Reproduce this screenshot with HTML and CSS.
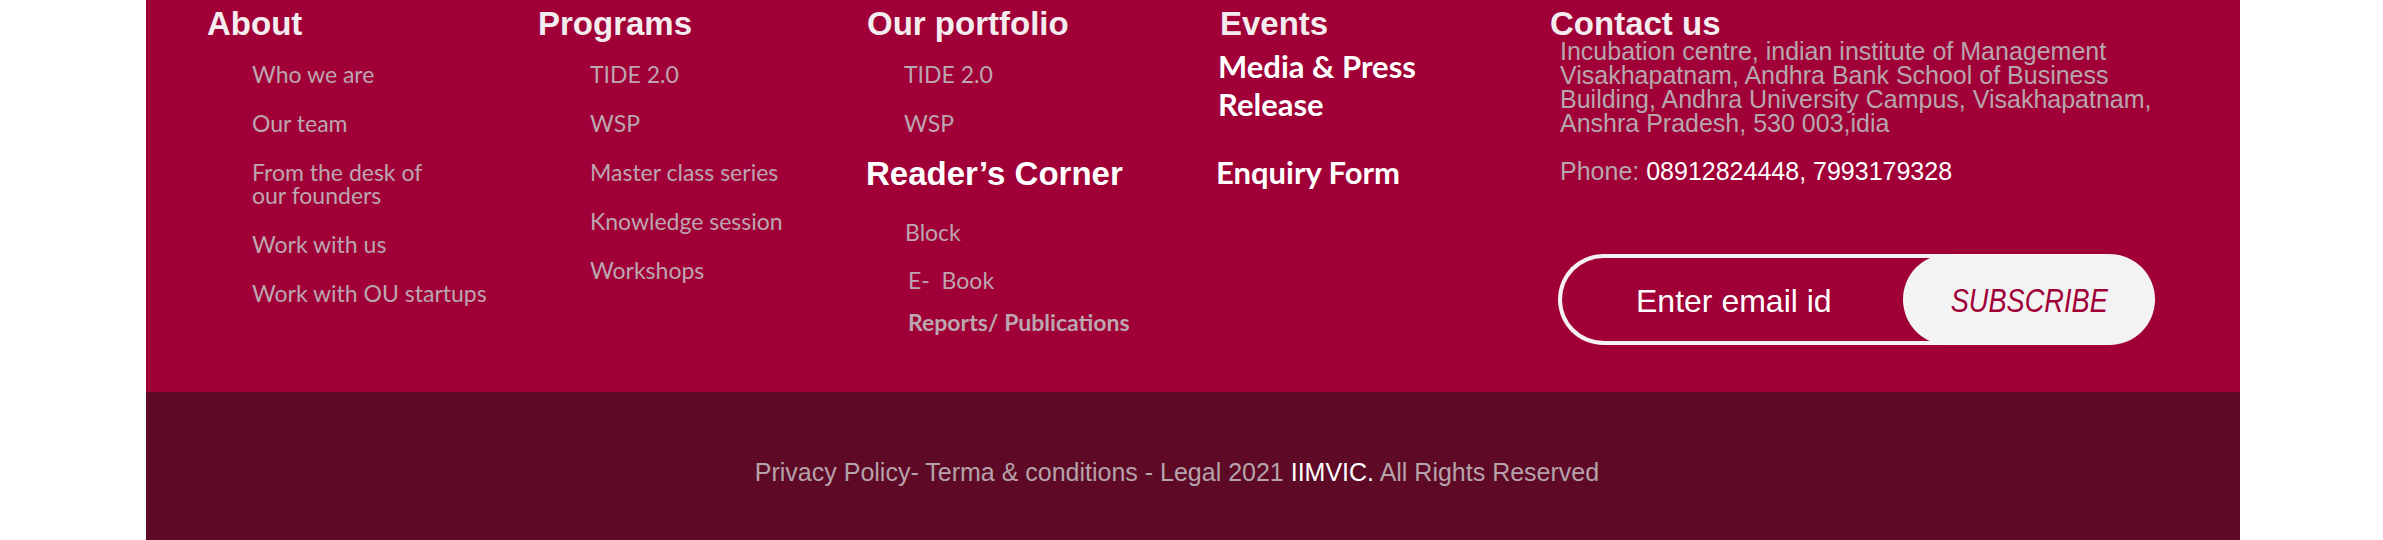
FILE: index.html
```html
<!DOCTYPE html>
<html lang="en">
<head>
<meta charset="utf-8">
<title>IIMVIC Footer</title>
<link rel="stylesheet" href="styles.css">
</head>
<body>
<footer class="footer">
  <div class="footer-main">
    <section class="col">
      <h3 class="col-title">About</h3>
      <ul class="links links-about">
        <li>Who we are</li>
        <li>Our team</li>
        <li>From the desk of<br>our founders</li>
        <li>Work with us</li>
        <li>Work with OU startups</li>
      </ul>
    </section>

    <section class="col">
      <h3 class="col-title">Programs</h3>
      <ul class="links links-programs">
        <li>TIDE 2.0</li>
        <li>WSP</li>
        <li>Master class series</li>
        <li>Knowledge session</li>
        <li>Workshops</li>
      </ul>
    </section>

    <section class="col">
      <h3 class="col-title">Our portfolio</h3>
      <ul class="links links-portfolio">
        <li>TIDE 2.0</li>
        <li>WSP</li>
      </ul>
      <h3 class="col-title col-title-white col-title-sub">Reader’s Corner</h3>
      <ul class="links links-reader">
        <li>Block</li>
        <li class="shift">E-&nbsp; Book</li>
        <li class="shift strong tight">Reports/ Publications</li>
      </ul>
    </section>

    <section class="col">
      <h3 class="col-title">Events</h3>
      <p class="feature">Media &amp; Press<br>Release</p>
      <p class="feature feature-enquiry">Enquiry Form</p>
    </section>

    <section class="col">
      <h3 class="col-title">Contact us</h3>
      <p class="address">Incubation centre, indian institute of Management<br>Visakhapatnam, Andhra Bank School of Business<br>Building, Andhra University Campus, Visakhapatnam,<br>Anshra Pradesh, 530 003,idia</p>
      <p class="phone">Phone: <span class="phone-num">08912824448, 7993179328</span></p>
      <form class="subscribe">
        <div class="email">Enter email id</div>
        <button type="button" class="subscribe-btn"><span>SUBSCRIBE</span></button>
      </form>
    </section>
  </div>
  <div class="footer-bottom">
    <p class="legal">Privacy Policy- Terma &amp; conditions - Legal 2021 <span class="brand">IIMVIC.</span> All Rights Reserved</p>
  </div>
</footer>
</body>
</html>
```

FILE: styles.css
```css
* {
  box-sizing: border-box;
}

html,
body {
  margin: 0;
}

body {
  background: #ffffff;
  padding: 0 143px 0 146px;
  height: 540px;
  overflow: hidden;
}

.footer-main {
  background: #a00037;
  height: 392px;
  display: grid;
  grid-template-columns: 331px 329px 353px 330px 1fr;
  padding: 6px 0 0 61px;
}

.col {
  min-width: 0;
}

.col-title {
  margin: 0;
  font: bold 33px/36px "Liberation Sans", Arial, sans-serif;
  color: #f4ecef;
  white-space: nowrap;
}

.col-title-white {
  color: #ffffff;
}

.col-title-sub {
  margin-top: 21px;
  margin-left: -1px;
}

.links {
  list-style: none;
  margin: 21px 0 0;
  padding: 0;
  display: flex;
  flex-direction: column;
  gap: 26px;
  font: 23px/23px Lato, "Open Sans", sans-serif;
  color: #bca6b0;
  white-space: nowrap;
}

.links-about {
  padding-left: 45px;
}

.links-programs {
  padding-left: 52px;
}

.links-portfolio {
  padding-left: 37px;
}

.links-reader {
  margin-top: 29px;
  padding-left: 38px;
  gap: 25px;
}

.links .shift {
  padding-left: 3px;
}

.links .strong {
  font-weight: bold;
}

.links .tight {
  margin-top: -6px;
}

.feature {
  margin: 5px 0 0 -2px;
  font: bold 31px/38px Lato, "Open Sans", sans-serif;
  color: #ffffff;
  white-space: nowrap;
}

.feature-enquiry {
  margin-top: 30px;
  margin-left: -4px;
}

.address {
  margin: -3px 0 0 10px;
  font: 25px/24px "Liberation Sans", Arial, sans-serif;
  color: #b8a6ae;
  white-space: nowrap;
}

.phone {
  margin: 24px 0 0 10px;
  font: 25px/24px "Liberation Sans", Arial, sans-serif;
  color: #b8a6ae;
}

.phone-num {
  color: #ffffff;
}

.subscribe {
  display: flex;
  width: 597px;
  height: 91px;
  margin: 71px 0 0 8px;
}

.email {
  flex: 1;
  display: flex;
  align-items: center;
  padding: 4px 0 0 74px;
  border: 4px solid #f8f1f3;
  border-right: 0;
  border-radius: 46px 0 0 46px;
  font: 32px "Liberation Sans", Arial, sans-serif;
  color: #ffffff;
}

.subscribe-btn {
  width: 252px;
  margin: 0 0 0 -47px;
  padding: 2px 0 0;
  border: 0;
  border-radius: 46px;
  background: #f3f3f3;
  display: flex;
  align-items: center;
  justify-content: center;
  font: italic 34px "Liberation Sans", Arial, sans-serif;
  color: #a00037;
}

.subscribe-btn span {
  display: inline-block;
  transform: scaleX(0.8);
}

.footer-bottom {
  background: #5e0926;
  height: 148px;
  padding: 66px 32px 0 0;
}

.legal {
  margin: 0;
  text-align: center;
  font: 25px/28px "Liberation Sans", Arial, sans-serif;
  color: #b6a2aa;
}

.brand {
  color: #ffffff;
}
```
